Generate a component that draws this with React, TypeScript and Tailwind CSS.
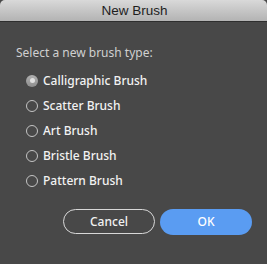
import React from "react";

const items = ["Calligraphic Brush", "Scatter Brush", "Art Brush", "Bristle Brush", "Pattern Brush"];

export default function App() {
  return (
    <div className="w-[267px] h-[264px] bg-[#484848] flex flex-col" style={{ fontFamily: '"Noto Sans", "Open Sans", sans-serif' }}>
      <div className="h-[22px] rounded-t-[5px] bg-gradient-to-b from-[#d9d9d9] to-[#b3b3b3] border-b border-[#2e2e2e] flex items-center justify-center shrink-0">
        <span className="text-[13.5px] text-[#1e1e1e] leading-none pl-[2px]" style={{ fontFamily: '"Liberation Sans", Arial, sans-serif' }}>New Brush</span>
      </div>
      <div className="pl-[16px] mt-[23px] h-[16px] leading-[16px] text-[12px] text-[#d0d0d0]">Select a new brush type:</div>
      <div className="mt-[7px] flex flex-col">
        {items.map((t, i) => (
          <div key={t} className="h-[25px] flex items-center pl-[26px]">
            {i === 0 ? (
              <span className="w-[12px] h-[12px] rounded-full bg-gradient-to-b from-[#b0b0b0] to-[#8e8e8e] flex items-center justify-center">
                <span className="w-[5px] h-[5px] rounded-full bg-[#e0e0e0]" />
              </span>
            ) : (
              <span className="w-[12px] h-[12px] rounded-full border border-[#c4c4c4]" />
            )}
            <span className="ml-[5px] text-[12px] font-medium text-[#f2f2f2] leading-none">{t}</span>
          </div>
        ))}
      </div>
      <div className="mt-[16px] flex justify-end gap-[5px] pr-[15px]">
        <button className="w-[92px] h-[25px] rounded-full border border-[#d8d8d8] text-[12px] font-medium text-[#f2f2f2]">Cancel</button>
        <button className="w-[92px] h-[26px] rounded-full bg-[#5a9cf2] text-[12px] font-medium text-white">OK</button>
      </div>
    </div>
  );
}
